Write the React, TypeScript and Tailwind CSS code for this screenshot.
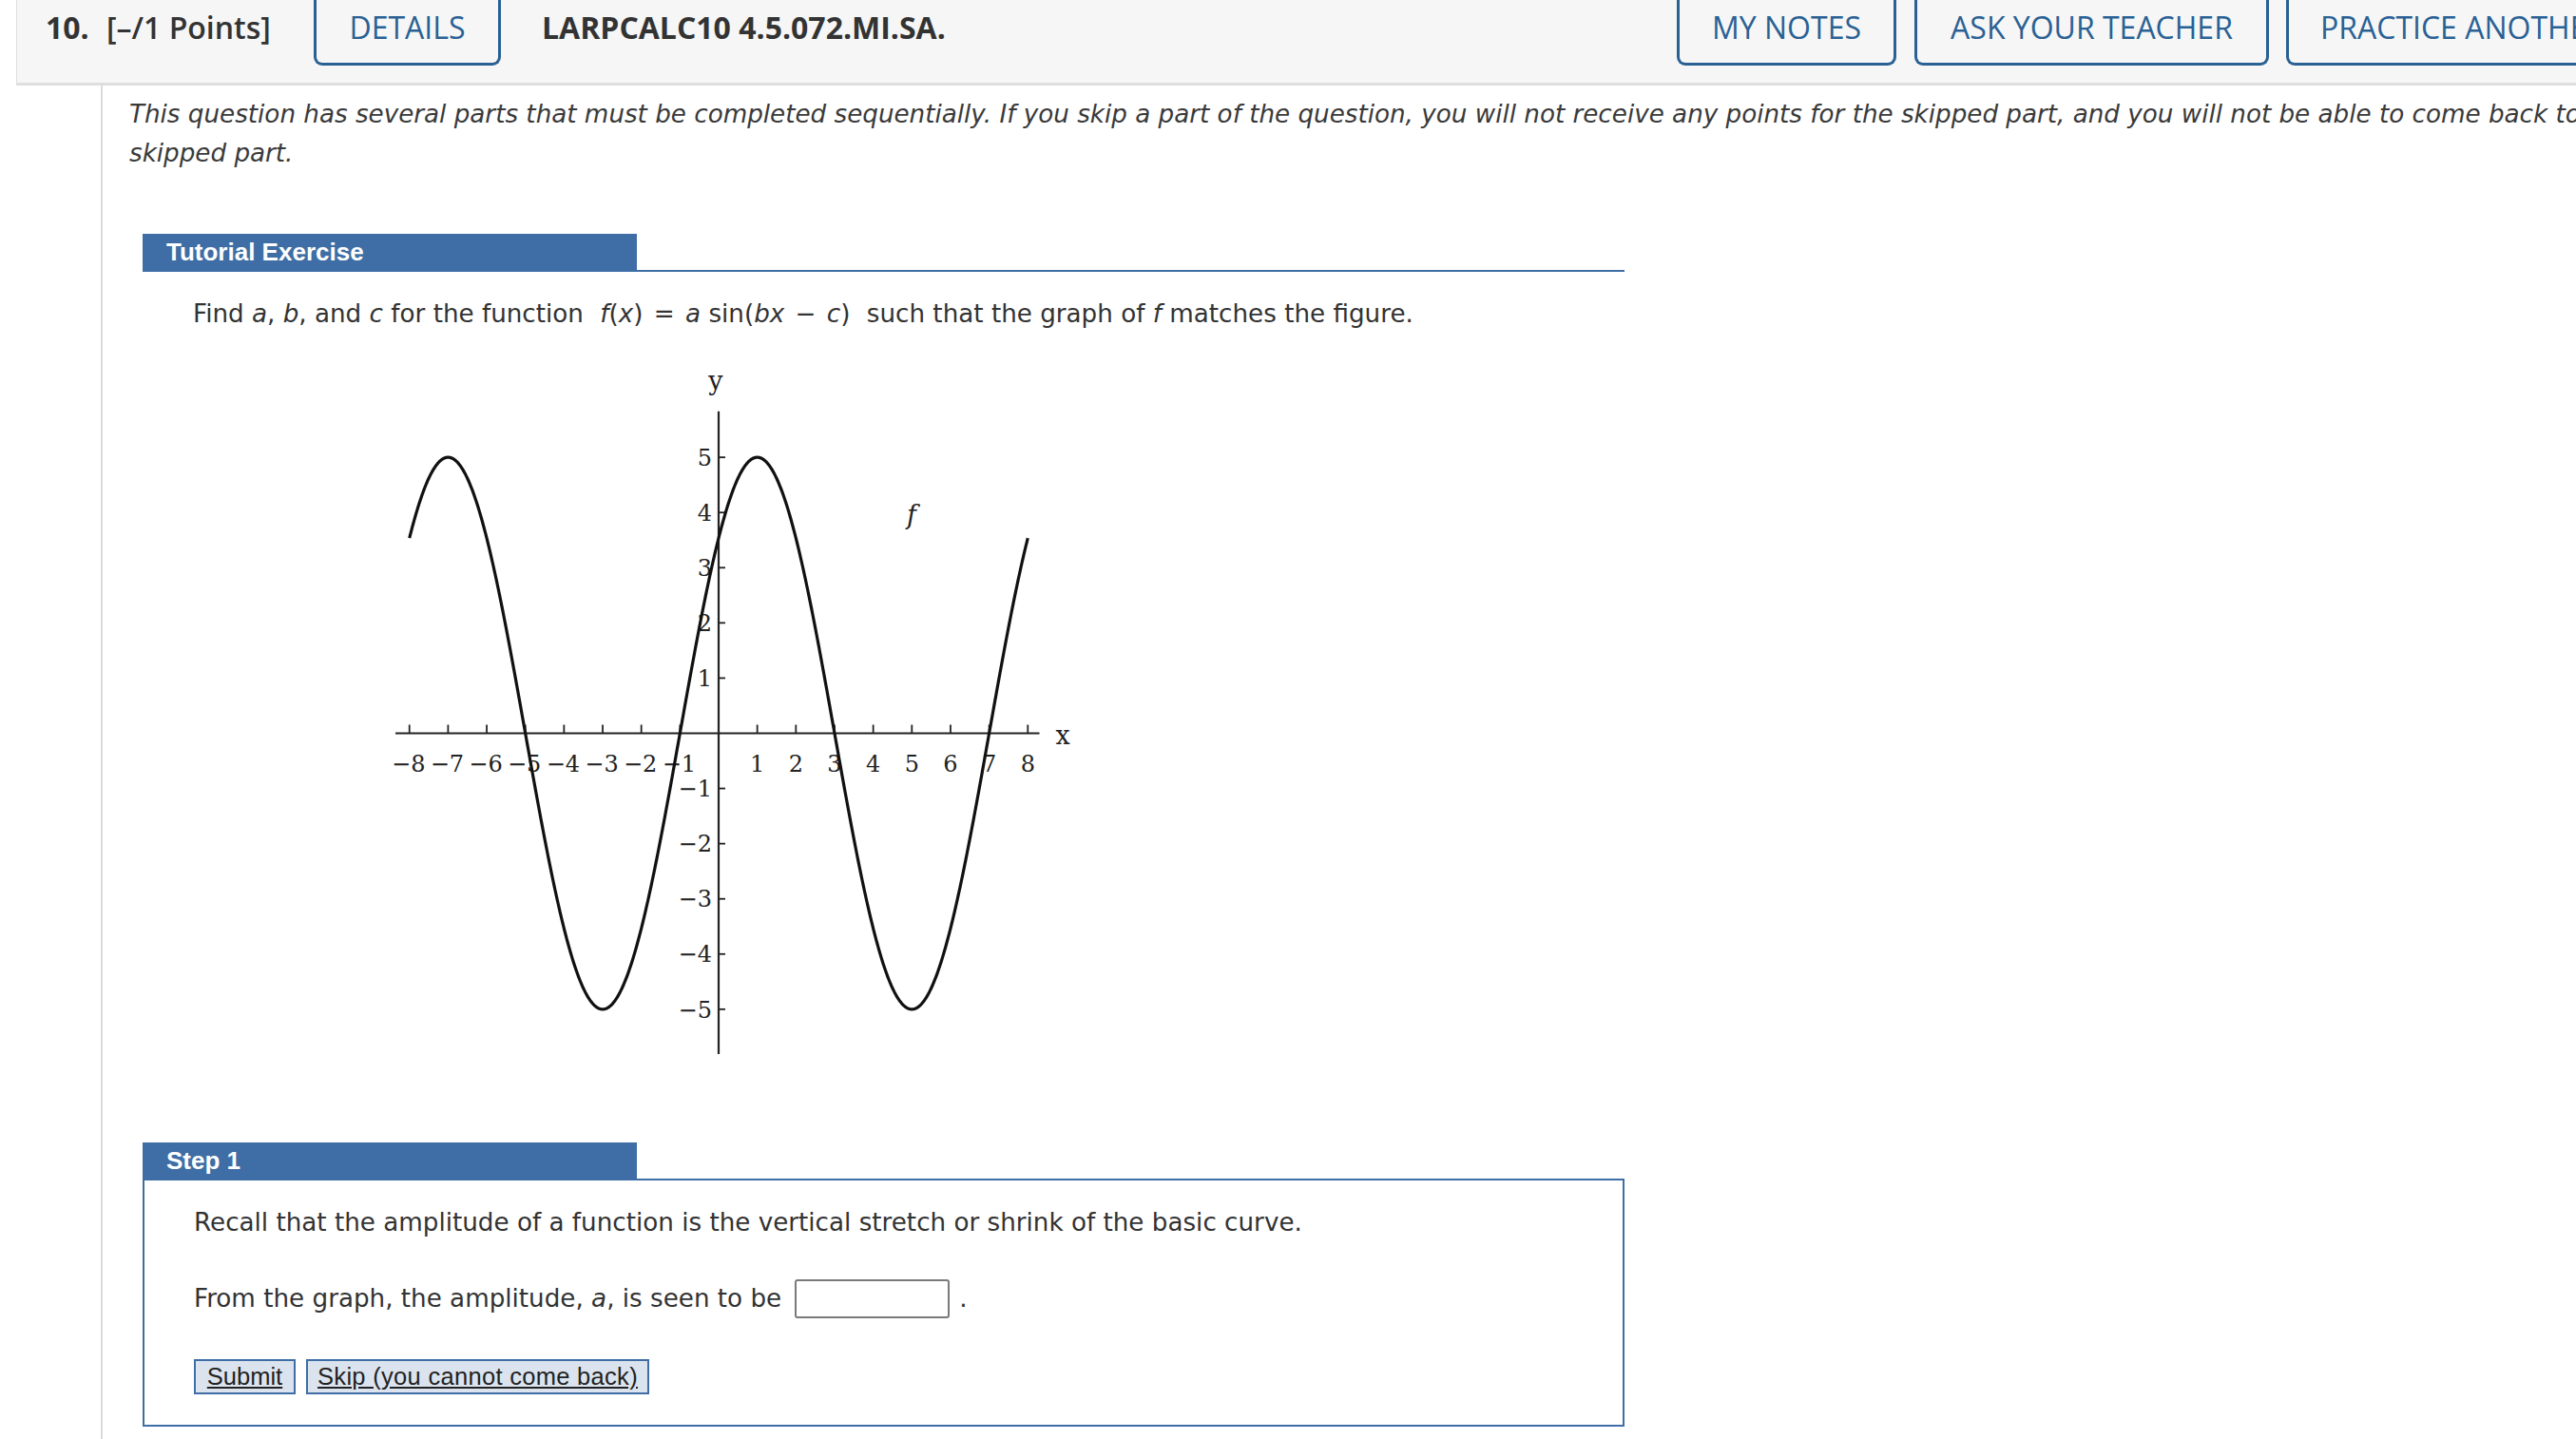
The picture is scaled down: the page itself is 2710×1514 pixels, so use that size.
import React from "react";

const OX = 356;
const OY = 391.5;
const UX = 40.66;
const UY = 58.07;

function Graph() {
  const pts: string[] = [];
  for (let i = 0; i <= 640; i++) {
    const x = -8 + i * 0.025;
    const X = OX + x * UX;
    const Y = OY - 5 * Math.sin((Math.PI / 4) * (x + 1)) * UY;
    pts.push(`${i === 0 ? "M" : "L"}${X.toFixed(2)},${Y.toFixed(2)}`);
  }
  const xs = [-8, -7, -6, -5, -4, -3, -2, -1, 1, 2, 3, 4, 5, 6, 7, 8];
  const ys = [-5, -4, -3, -2, -1, 1, 2, 3, 4, 5];
  return (
    <svg width="740" height="740" viewBox="0 0 740 740" className="block">
      <g stroke="#222" strokeWidth="2.2" fill="none">
        <line x1="16" y1={OY} x2="693.5" y2={OY} />
        <line x1={OX} y1="52.7" x2={OX} y2="729" />
        {xs.map((k) => (
          <line key={"tx" + k} x1={OX + k * UX} y1={OY} x2={OX + k * UX} y2={OY - 9} strokeWidth="1.8" />
        ))}
        {ys.map((k) => (
          <line key={"ty" + k} x1={OX} y1={OY - k * UY} x2={OX + 7} y2={OY - k * UY} strokeWidth="1.8" />
        ))}
      </g>
      <g fill="#222" fontFamily="'DejaVu Serif', 'Liberation Serif', serif" fontSize="24">
        {xs.map((k) => (
          <text key={"lx" + k} x={OX + k * UX - (k < 0 ? 1 : 0)} y="432" textAnchor="middle">
            {k < 0 ? "\u2212" + Math.abs(k) : String(k)}
          </text>
        ))}
        {ys.map((k) => (
          <text key={"ly" + k} x="349" y={OY - k * UY + 8.7} textAnchor="end">
            {k < 0 ? "\u2212" + Math.abs(k) : String(k)}
          </text>
        ))}
        <text x="353" y="30" textAnchor="middle" fontSize="27">y</text>
        <text x="718" y="402.7" textAnchor="middle" fontSize="27">x</text>
        <text x="559" y="171" textAnchor="middle" fontSize="27" fontStyle="italic">f</text>
      </g>
      <path d={pts.join(" ")} stroke="#111" strokeWidth="3.2" fill="none" strokeLinejoin="round" />
    </svg>
  );
}

export default function App() {
  const osans = { fontFamily: "'Open Sans', 'Noto Sans', sans-serif" };
  const btn =
    "h-[69px] shrink-0 border-x-[3px] border-b-[3px] border-[#2a6194] rounded-b-[9px] pt-[7px] text-center text-[32px] leading-[44px] text-[#2a6194] whitespace-nowrap";
  return (
    <div className="w-[2710px] h-[1514px] overflow-hidden bg-white relative">
      {/* Header */}
      <div
        className="ml-[17px] h-[90px] w-[2800px] bg-[#f6f6f6] border-l border-b-[3px] border-[#dedede] flex items-start text-[#333]"
        style={osans}
      >
        <div className="w-[1746px] shrink-0 pl-[30px] flex items-start">
          <div className="w-[64px] shrink-0 pt-[7px] text-[32px] leading-[44px] font-bold">10.</div>
          <div className="w-[218px] shrink-0 pt-[7px] text-[32px] leading-[44px] font-semibold whitespace-nowrap">[–/1 Points]</div>
          <div className={"w-[197px] " + btn}>DETAILS</div>
          <div className="ml-[43px] pt-[7px] text-[32px] leading-[44px] font-bold whitespace-nowrap">LARPCALC10 4.5.072.MI.SA.</div>
        </div>
        <div className="flex items-start shrink-0">
          <div className={"w-[231px] " + btn}>MY NOTES</div>
          <div className={"ml-[19px] w-[373px] " + btn}>ASK YOUR TEACHER</div>
          <div className={"ml-[18px] px-[33px] " + btn}>PRACTICE ANOTHER</div>
        </div>
      </div>

      {/* Body */}
      <div
        className="ml-[106px] border-l-2 border-[#dadada] h-[1424px] pt-[10px] text-[#333]"
        style={{ fontFamily: "'DejaVu Sans', Verdana, sans-serif" }}
      >
        <p className="ml-[28px] italic text-[26.2px] leading-[41px] whitespace-nowrap text-[#3a3a3a]">
          This question has several parts that must be completed sequentially. If you skip a part of the question, you will not receive any points for the skipped part, and you will not be able to come back to the
          <br />
          skipped part.
        </p>

        {/* Tutorial */}
        <div className="ml-[42px] mt-[64px] w-[1559px]">
          <div className="flex border-b-2 border-[#3e6ea5]">
            <div
              className="w-[520px] h-[38px] bg-[#3e6ea5] text-white font-bold text-[26px] leading-[38px] pl-[25px]"
              style={{ fontFamily: "'Liberation Sans', Arial, sans-serif" }}
            >
              Tutorial Exercise
            </div>
          </div>
          <p className="mt-[24px] ml-[53px] text-[26.2px] leading-[41px] whitespace-nowrap">
            Find <i>a</i>, <i>b</i>, and <i>c</i> for the function{" "}
            <span className="ml-[9px] mr-[9px]">
              <i>f</i>(<i>x</i>)<span className="mx-[3px]"> = </span><i>a</i> sin(<i>bx</i>
              <span className="mx-[3px]"> − </span>
              <i>c</i>)
            </span>{" "}
            such that the graph of <i>f</i> matches the figure.
          </p>
          <div className="mt-[29px] ml-[250px]">
            <Graph />
          </div>
        </div>

        {/* Step 1 */}
        <div className="ml-[42px] mt-[82px] w-[1559px]">
          <div
            className="w-[520px] h-[38px] bg-[#3e6ea5] text-white font-bold text-[26px] leading-[38px] pl-[25px]"
            style={{ fontFamily: "'Liberation Sans', Arial, sans-serif" }}
          >
            Step 1
          </div>
          <div className="border-2 border-[#3e6ea5] pl-[52px] pt-[24px] pb-[32px]">
            <p className="text-[26.2px] leading-[41px] whitespace-nowrap">
              Recall that the amplitude of a function is the vertical stretch or shrink of the basic curve.
            </p>
            <div className="mt-[39px] h-[41px] flex items-center text-[26.2px] whitespace-nowrap">
              <span>
                From the graph, the amplitude, <i>a</i>, is seen to be
              </span>
              <div className="ml-[14px] w-[163px] h-[41px] border-2 border-[#7a7a7a] rounded-[3px] bg-white" />
              <span className="ml-[10px]">.</span>
            </div>
            <div className="mt-[43px] flex" style={{ fontFamily: "'Liberation Sans', Arial, sans-serif" }}>
              <div className="w-[107px] h-[37px] bg-[#dbe4ee] border-2 border-[#3e6ea5] text-[25.5px] leading-[33px] text-center underline text-[#222]">
                Submit
              </div>
              <div className="ml-[11px] w-[361px] h-[37px] bg-[#dbe4ee] border-2 border-[#3e6ea5] text-[25.5px] leading-[33px] text-center underline text-[#222] whitespace-nowrap tracking-[0.3px]">
                Skip (you cannot come back)
              </div>
            </div>
          </div>
        </div>
      </div>
    </div>
  );
}
